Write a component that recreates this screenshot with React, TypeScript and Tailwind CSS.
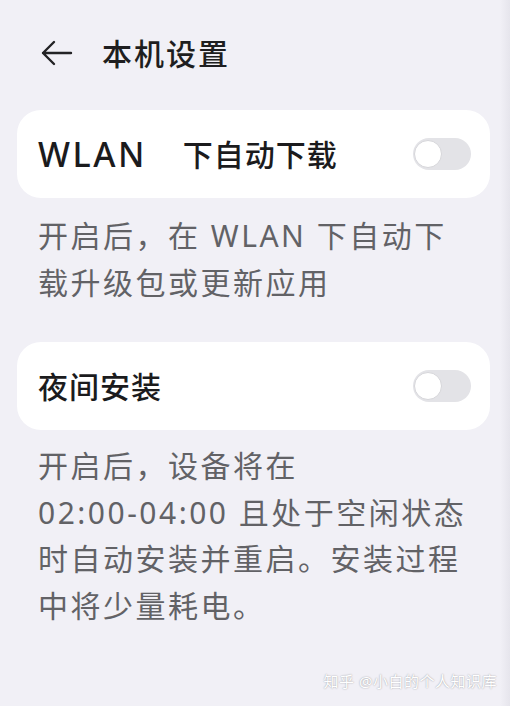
import { useState, type ReactNode } from "react";

const font = "font-['Noto_Sans','Noto_Sans_CJK_SC',sans-serif]";

function Toggle({ on, onChange }: { on: boolean; onChange: (v: boolean) => void }) {
  return (
    <button
      type="button"
      role="switch"
      aria-checked={on}
      onClick={() => onChange(!on)}
      className={`relative h-[32px] w-[58px] shrink-0 rounded-full ${
        on ? "bg-[#3f6ee8]" : "bg-[#e3e3e7]"
      }`}
    >
      <span
        className={`absolute top-[2px] h-[28px] w-[28px] rounded-full border-[1.5px] border-[#d6d6da] bg-white ${
          on ? "left-[28px]" : "left-[1px]"
        }`}
      />
    </button>
  );
}

function SettingCard({
  children,
  on,
  onChange,
}: {
  children: ReactNode;
  on: boolean;
  onChange: (v: boolean) => void;
}) {
  return (
    <div className="ml-[17px] mr-[20px] flex h-[88px] items-center justify-between rounded-[24px] bg-white pl-[21px] pr-[19px]">
      <span className="flex items-center text-[30px] font-medium tracking-[1px] text-[#1b1b1d]">
        {children}
      </span>
      <Toggle on={on} onChange={onChange} />
    </div>
  );
}

function Description({ lines }: { lines: string[] }) {
  return (
    <div className="px-[38px] text-[30px] leading-[46.5px] tracking-[2.5px] text-[#626266]">
      {lines.map((line) => (
        <p key={line}>{line}</p>
      ))}
    </div>
  );
}

export default function App() {
  const [wlan, setWlan] = useState(false);
  const [night, setNight] = useState(false);

  return (
    <div className={`relative h-[706px] w-[510px] overflow-hidden bg-[#f1f0f6] ${font}`}>
      {/* header */}
      <div className="flex h-[110px] items-center pb-[4px] pl-[40px]">
        <svg width="33" height="26" viewBox="0 0 33 26" fill="none" className="shrink-0">
          <path
            d="M31 13H3M14 2L3 13L14 24"
            stroke="#232325"
            strokeWidth="2.4"
            strokeLinecap="round"
            strokeLinejoin="round"
          />
        </svg>
        <h1 className="ml-[29px] text-[30px] font-medium tracking-[2px] text-[#1e1e20]">本机设置</h1>
      </div>

      <SettingCard on={wlan} onChange={setWlan}>
        <span className="text-[34px] leading-none tracking-[2.5px]">WLAN</span>
        <span className="ml-[36px]">下自动下载</span>
      </SettingCard>
      <div className="pt-[15px]">
        <Description lines={["开启后，在 WLAN 下自动下", "载升级包或更新应用"]} />
      </div>

      <div className="pt-[36px]">
        <SettingCard on={night} onChange={setNight}>
          夜间安装
        </SettingCard>
      </div>
      <div className="pt-[13px]">
        <Description
          lines={[
            "开启后，设备将在",
            "02:00-04:00 且处于空闲状态",
            "时自动安装并重启。安装过程",
            "中将少量耗电。",
          ]}
        />
      </div>

      {/* screen edge shading */}
      <div className="absolute inset-y-0 right-0 w-[10px] bg-gradient-to-r from-[#f1f0f6] to-[#e6e5ec]" />

      {/* watermark */}
      <span className="absolute right-[13px] top-[670px] text-[15px] tracking-[0.5px] text-white [text-shadow:0_0_1.5px_#8a8a90]">
        知乎 @小白的个人知识库
      </span>
    </div>
  );
}
